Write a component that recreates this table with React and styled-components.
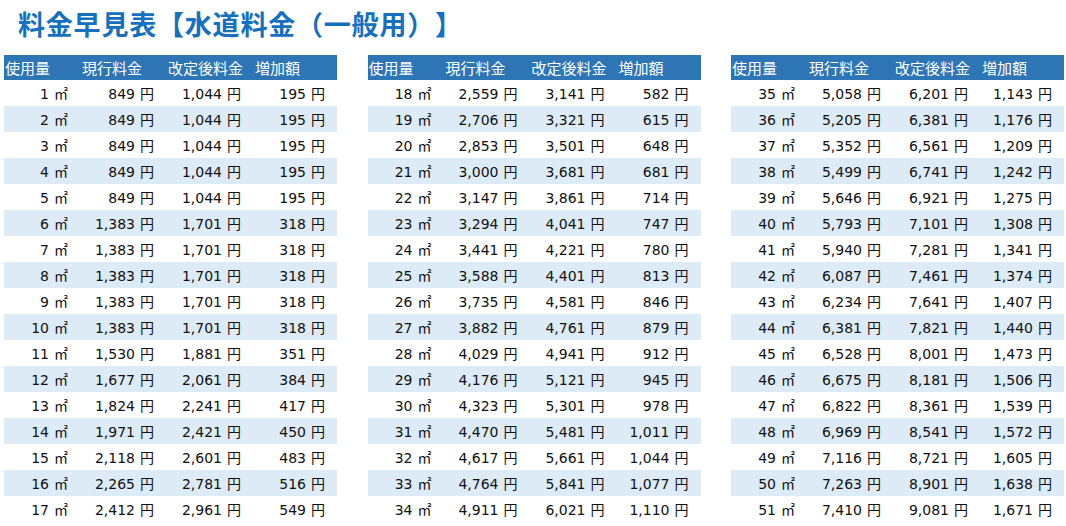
import React from 'react';
import styled, { createGlobalStyle } from 'styled-components';

const GlobalStyle = createGlobalStyle`
  html, body {
    margin: 0;
    padding: 0;
    background: #ffffff;
  }
  body {
    font-family: "DejaVu Sans", "Noto Sans CJK JP", sans-serif;
  }
`;

const Page = styled.div`
  width: 1066px;
  height: 526px;
  padding: 0 2px 0 4px;
  box-sizing: border-box;
  overflow: hidden;
`;

const Title = styled.h1`
  margin: 0;
  height: 55px;
  padding-left: 14px;
  font-family: "Noto Sans CJK JP", sans-serif;
  font-weight: 700;
  font-size: 27px;
  line-height: 48px;
  letter-spacing: 0.8px;
  color: #1570bf;
  text-spacing-trim: space-all;
  white-space: nowrap;
`;

const Tables = styled.div`
  display: flex;
  justify-content: space-between;
  width: 1060px;
`;

const Table = styled.div`
  width: 333px;
`;

const Row = styled.div`
  display: grid;
  grid-template-columns: 77px 86px 87px 83px;
  height: ${p => (p.$head ? 25 : 26)}px;
  background: ${p => (p.$head ? '#2e75b6' : p.$shade ? '#ddebf7' : '#ffffff')};
`;

const HeadCell = styled.div`
  font-family: "Noto Sans CJK JP", sans-serif;
  font-size: 15px;
  line-height: 25px;
  color: #ffffff;
  padding-left: 1px;
  white-space: nowrap;
`;

const Cell = styled.div`
  font-family: "DejaVu Sans", "Noto Sans CJK JP", sans-serif;
  font-size: 14px;
  line-height: 26px;
  color: #111111;
  text-align: right;
  padding-right: ${p => (p.$last ? 12 : 13)}px;
  white-space: nowrap;
`;

const Unit = styled.span`
  font-family: "Noto Sans CJK JP", sans-serif;
  margin-left: 5px;
`;

const heads = ['使用量', '現行料金', '改定後料金', '増加額'];

const fmt = n => n.toLocaleString('en-US');

function fees(v) {
  const now = v <= 5 ? 849 : v <= 10 ? 1383 : 1383 + (v - 10) * 147;
  const next = v <= 5 ? 1044 : v <= 10 ? 1701 : 1701 + (v - 10) * 180;
  return { now, next, diff: next - now };
}

function FeeTable({ from, to }) {
  const rows = [];
  for (let v = from; v <= to; v++) rows.push(v);
  return (
    <Table>
      <Row $head>
        {heads.map(h => <HeadCell key={h}>{h}</HeadCell>)}
      </Row>
      {rows.map((v, i) => {
        const f = fees(v);
        return (
          <Row key={v} $shade={i % 2 === 1}>
            <Cell>{v}<Unit>㎡</Unit></Cell>
            <Cell>{fmt(f.now)}<Unit>円</Unit></Cell>
            <Cell>{fmt(f.next)}<Unit>円</Unit></Cell>
            <Cell $last>{fmt(f.diff)}<Unit>円</Unit></Cell>
          </Row>
        );
      })}
    </Table>
  );
}

export default function App() {
  return (
    <Page>
      <GlobalStyle />
      <Title>料金早見表【水道料金（一般用）】</Title>
      <Tables>
        <FeeTable from={1} to={17} />
        <FeeTable from={18} to={34} />
        <FeeTable from={35} to={51} />
      </Tables>
    </Page>
  );
}
